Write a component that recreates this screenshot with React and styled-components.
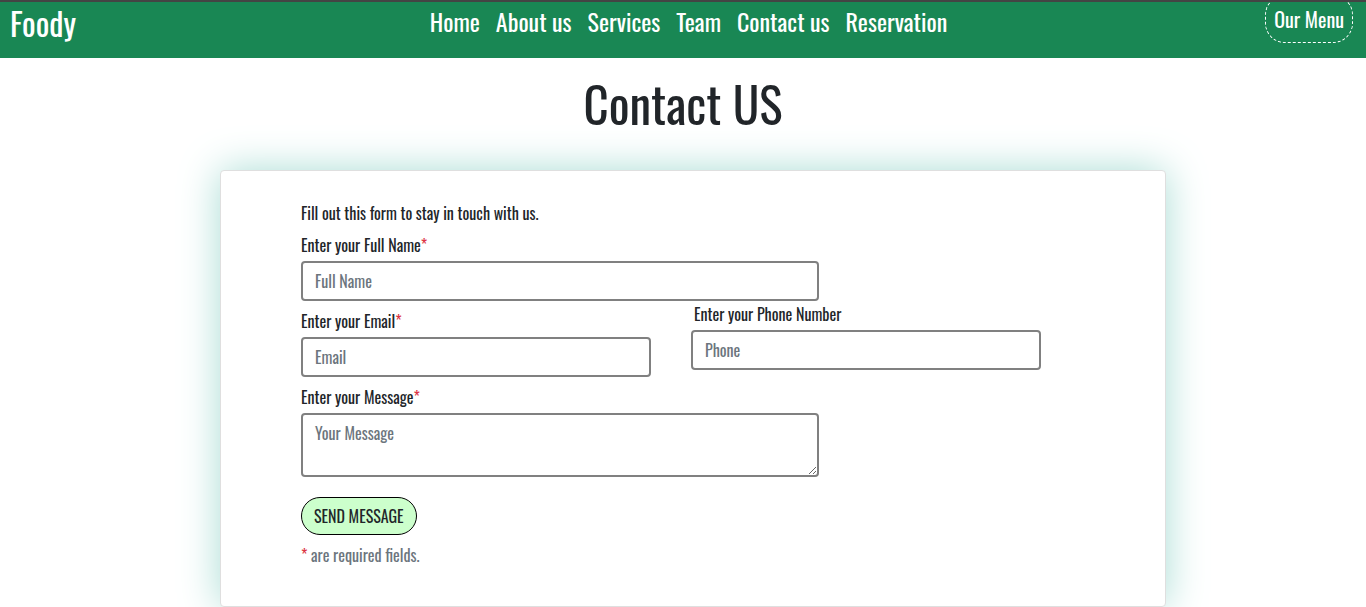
import React from "react";
import styled, { createGlobalStyle } from "styled-components";

const GlobalStyle = createGlobalStyle`
  *, *::before, *::after { box-sizing: border-box; }
  body {
    margin: 0;
    background: #fff;
    color: #212529;
    font-family: Oswald, "Liberation Sans Narrow", "DejaVu Sans Condensed", sans-serif;
    font-size: 16px;
    line-height: 24px;
  }
  button, input, textarea { font: inherit; color: inherit; }
`;

const Header = styled.header`
  display: grid;
  grid-template-columns: 1fr auto 1fr;
  align-items: start;
  height: 58px;
  padding: 0 13px 0 10px;
  border-top: 2px solid #444;
  background: #198754;
  overflow: hidden;
`;

const Brand = styled.a`
  justify-self: start;
  color: #fff;
  font-size: 32px;
  line-height: 42px;
  text-decoration: none;
`;

const Nav = styled.nav`
  display: flex;
  gap: 16px;
  padding-left: 14px;
`;

const NavLink = styled.a`
  color: #fff;
  font-size: 24px;
  line-height: 38px;
  text-decoration: none;
  white-space: nowrap;
`;

const MenuButton = styled.button`
  justify-self: end;
  height: 48px;
  margin-top: -7px;
  padding: 0 8px;
  border: 1px dashed #fff;
  border-radius: 20px;
  background: transparent;
  color: #fff;
  font-size: 20px;
  white-space: nowrap;
`;

const Title = styled.h1`
  margin: 16px 0 38px;
  font-size: 49px;
  font-weight: 400;
  line-height: 58px;
  text-align: center;
`;

const Card = styled.main`
  margin: 0 200px 0 220px;
  padding: 30px 80px 39px;
  border: 1px solid #dfdfdf;
  border-radius: 4px;
  background: #fff;
  box-shadow: 0 0 40px #a8dcd4;
`;

const Intro = styled.p`
  margin: 0;
`;

const Field = styled.div`
  display: flex;
  flex-direction: column;
  gap: 4px;
  width: ${(p) => p.$width}px;
  max-width: 100%;
  padding-top: ${(p) => (p.$raised ? 1 : 8)}px;
`;

const FieldRow = styled.div`
  display: flex;
  align-items: flex-start;
  gap: 40px;
`;

const Label = styled.label`
  padding-left: ${(p) => (p.$inset ? 3 : 0)}px;
`;

const Required = styled.span`
  color: #dc3545;
`;

const Input = styled.input`
  width: 100%;
  height: 40px;
  padding: 6px 12px;
  border: 2px solid #808080;
  border-radius: 4px;
  background: #fff;
  &::placeholder { color: #6c757d; opacity: 1; }
`;

const TextArea = styled(Input).attrs({ as: "textarea" })`
  display: block;
  height: 64px;
  resize: vertical;
`;

const SendButton = styled.button`
  display: block;
  height: 38px;
  margin: 20px 0 8px;
  padding: 0 12px;
  border: 1px solid #000;
  border-radius: 20px;
  background: #ccffcc;
`;

const Note = styled.p`
  margin: 0;
  color: #6c757d;
`;

const links = ["Home", "About us", "Services", "Team", "Contact us", "Reservation"];

function FormField({ id, label, width, required, raised, children }) {
  return (
    <Field $width={width} $raised={raised}>
      <Label htmlFor={id} $inset={raised}>
        {label}
        {required && <Required>*</Required>}
      </Label>
      {children}
    </Field>
  );
}

export default function App() {
  return (
    <>
      <GlobalStyle />
      <Header>
        <Brand href="#">Foody</Brand>
        <Nav>
          {links.map((l) => (
            <NavLink key={l} href="#">{l}</NavLink>
          ))}
        </Nav>
        <MenuButton type="button">Our Menu</MenuButton>
      </Header>
      <Title>Contact US</Title>
      <Card>
        <form>
          <Intro>Fill out this form to stay in touch with us.</Intro>
          <FormField id="name" label="Enter your Full Name" width={518} required>
            <Input id="name" type="text" placeholder="Full Name" />
          </FormField>
          <FieldRow>
            <FormField id="email" label="Enter your Email" width={350} required>
              <Input id="email" type="email" placeholder="Email" />
            </FormField>
            <FormField id="phone" label="Enter your Phone Number" width={350} raised>
              <Input id="phone" type="tel" placeholder="Phone" />
            </FormField>
          </FieldRow>
          <FormField id="message" label="Enter your Message" width={518} required>
            <TextArea id="message" placeholder="Your Message" />
          </FormField>
          <SendButton type="button">SEND MESSAGE</SendButton>
          <Note><Required>*</Required> are required fields.</Note>
        </form>
      </Card>
    </>
  );
}
